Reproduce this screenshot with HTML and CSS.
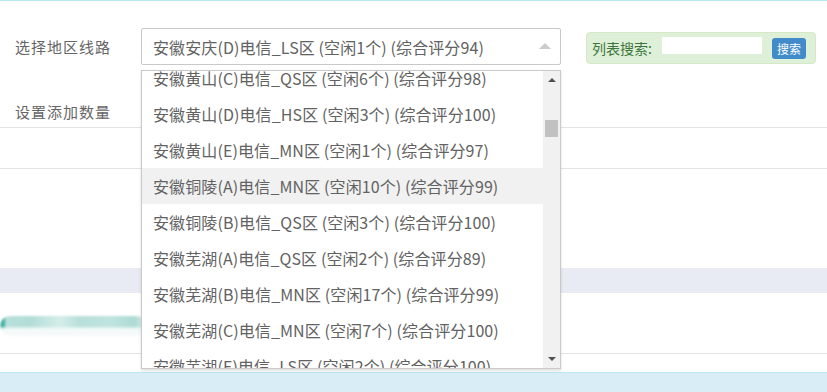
FILE: index.html
```html
<!DOCTYPE html>
<html lang="zh-CN">
<head>
<meta charset="utf-8">
<title>选择地区线路</title>
<link rel="stylesheet" href="styles.css">
</head>
<body>
<div class="topline"></div>
<div class="form">
  <div class="row row-first">
    <div class="label">选择地区线路</div>
    <div class="select-wrap">
      <div class="select">
        <span class="select-text">安徽安庆(D)电信_LS区 (空闲1个) (综合评分94)</span>
        <span class="caret"></span>
      </div>
      <div class="dropdown">
        <div class="options">
          <div class="opt opt-first">安徽黄山(C)电信_QS区 (空闲6个) (综合评分98)</div>
          <div class="opt">安徽黄山(D)电信_HS区 (空闲3个) (综合评分100)</div>
          <div class="opt">安徽黄山(E)电信_MN区 (空闲1个) (综合评分97)</div>
          <div class="opt opt-hover">安徽铜陵(A)电信_MN区 (空闲10个) (综合评分99)</div>
          <div class="opt">安徽铜陵(B)电信_QS区 (空闲3个) (综合评分100)</div>
          <div class="opt">安徽芜湖(A)电信_QS区 (空闲2个) (综合评分89)</div>
          <div class="opt">安徽芜湖(B)电信_MN区 (空闲17个) (综合评分99)</div>
          <div class="opt">安徽芜湖(C)电信_MN区 (空闲7个) (综合评分100)</div>
          <div class="opt">安徽芜湖(E)电信_LS区 (空闲2个) (综合评分100)</div>
        </div>
        <div class="scrollbar">
          <span class="sb-up"></span>
          <span class="sb-thumb"></span>
          <span class="sb-down"></span>
        </div>
      </div>
    </div>
    <div class="search-panel">
      <span class="search-label">列表搜索:</span>
      <span class="search-input"></span>
      <span class="search-btn">搜索</span>
    </div>
  </div>
  <div class="row row-second">
    <div class="label">设置添加数量</div>
  </div>
</div>
<div class="divider d1"></div>
<div class="blank-a"></div>
<div class="divider"></div>
<div class="blank-b"></div>
<div class="gray-band"></div>
<div class="pill-row">
  <div class="pill"></div>
</div>
<div class="divider"></div>
<div class="blank-c"></div>
<div class="info-band">
  <div class="info-text">1.设置添加数量后请确认提交</div>
</div>
</body>
</html>
```

FILE: styles.css
```css
html, body {
  margin: 0;
  padding: 0;
  background: #ffffff;
  font-family: "Noto Sans CJK SC", "Noto Sans", sans-serif;
  color: #666666;
  overflow: hidden;
}

.topline {
  height: 1px;
  background: #b3e9f1;
}

.form {
  padding-top: 27px;
}

.row {
  display: flex;
  align-items: center;
}

.label {
  box-sizing: border-box;
  width: 141px;
  padding-left: 15px;
  font-size: 15px;
  line-height: 24px;
  color: #666666;
  letter-spacing: 1px;
}

.select-wrap {
  position: relative;
  width: 420px;
  height: 37px;
}

.select {
  box-sizing: border-box;
  height: 37px;
  border: 1px solid #c9c9c9;
  border-radius: 2px;
  display: flex;
  align-items: center;
  padding-left: 11px;
  padding-right: 9px;
}

.select-text {
  flex: 1;
  font-size: 16px;
  letter-spacing: 0.1px;
  color: #626262;
  white-space: nowrap;
}

.caret {
  width: 0;
  height: 0;
  border-left: 6px solid transparent;
  border-right: 6px solid transparent;
  border-bottom: 6px solid #cccccc;
  margin-top: -1px;
}

.dropdown {
  position: absolute;
  top: 42px;
  left: 0;
  width: 420px;
  height: 299px;
  box-sizing: border-box;
  border: 1px solid #c9c9c9;
  background: #ffffff;
  box-shadow: 0 2px 3px rgba(0, 0, 0, 0.12);
  display: flex;
  overflow: hidden;
  z-index: 10;
}

.options {
  flex: 1;
  overflow: hidden;
}

.opt {
  height: 36px;
  line-height: 36px;
  padding-left: 11px;
  font-size: 16px;
  letter-spacing: 0.1px;
  color: #626262;
  white-space: nowrap;
}

.opt-first {
  margin-top: -11px;
}

.opt-hover {
  background: #f1f1f1;
}

.scrollbar {
  position: relative;
  width: 17px;
  background: #f1f1f1;
}

.sb-up {
  position: absolute;
  top: 7px;
  left: 5px;
  width: 0;
  height: 0;
  border-left: 4px solid transparent;
  border-right: 4px solid transparent;
  border-bottom: 4px solid #505050;
}

.sb-down {
  position: absolute;
  bottom: 7px;
  left: 5px;
  width: 0;
  height: 0;
  border-left: 4px solid transparent;
  border-right: 4px solid transparent;
  border-top: 4px solid #505050;
}

.sb-thumb {
  position: absolute;
  top: 49px;
  left: 2px;
  width: 13px;
  height: 17px;
  background: #c1c1c1;
}

.search-panel {
  box-sizing: border-box;
  margin-left: 25px;
  width: 230px;
  height: 32px;
  margin-top: 3px;
  background: #dff0d8;
  border: 1px solid #d6e9c6;
  border-radius: 4px;
  display: flex;
  align-items: center;
  padding-left: 5px;
}

.search-label {
  font-size: 14px;
  color: #3c763d;
  width: 70px;
  white-space: nowrap;
}

.search-input {
  width: 100px;
  height: 17px;
  background: #ffffff;
  margin-top: -6px;
}

.search-btn {
  margin-left: 10px;
  width: 34px;
  height: 21px;
  background: #428bca;
  border-radius: 3px;
  color: #ffffff;
  font-size: 12px;
  line-height: 21px;
  text-align: center;
  margin-top: 1px;
}

.row-second {
  margin-top: 35px;
  height: 24px;
}

.divider {
  height: 1px;
  background: #e3e3e3;
}

.d1 {
  margin-top: 3px;
}

.blank-a {
  height: 40px;
}

.blank-b {
  height: 99px;
}

.gray-band {
  height: 25px;
  background: #e8ebf3;
}

.pill-row {
  height: 60px;
  padding-top: 23px;
  box-sizing: border-box;
}

.pill {
  width: 146px;
  height: 20px;
  border-radius: 10px;
  background:
    linear-gradient(to bottom, rgba(255,255,255,0) 0%, rgba(255,255,255,0) 50%, rgba(244,250,249,1) 65%, rgba(246,250,250,1) 100%),
    linear-gradient(to right, #3fae9f 0px, #3fae9f 4px, #b8e0db 6px, #b2dcd7 30px, #c3e6e1 45px, #d5ede9 60px, #b8dfda 80px, #c0e4df 110px, #addad4 135px, #e3f2f0 146px);
  filter: blur(0.8px);
}

.blank-c {
  height: 18px;
}

.info-band {
  border-top: 1px solid #bce8f1;
  background: #d9edf7;
  height: 40px;
  padding: 15px 0 0 5px;
}

.info-text {
  font-size: 14px;
  line-height: 20px;
  color: #31708f;
}
```
